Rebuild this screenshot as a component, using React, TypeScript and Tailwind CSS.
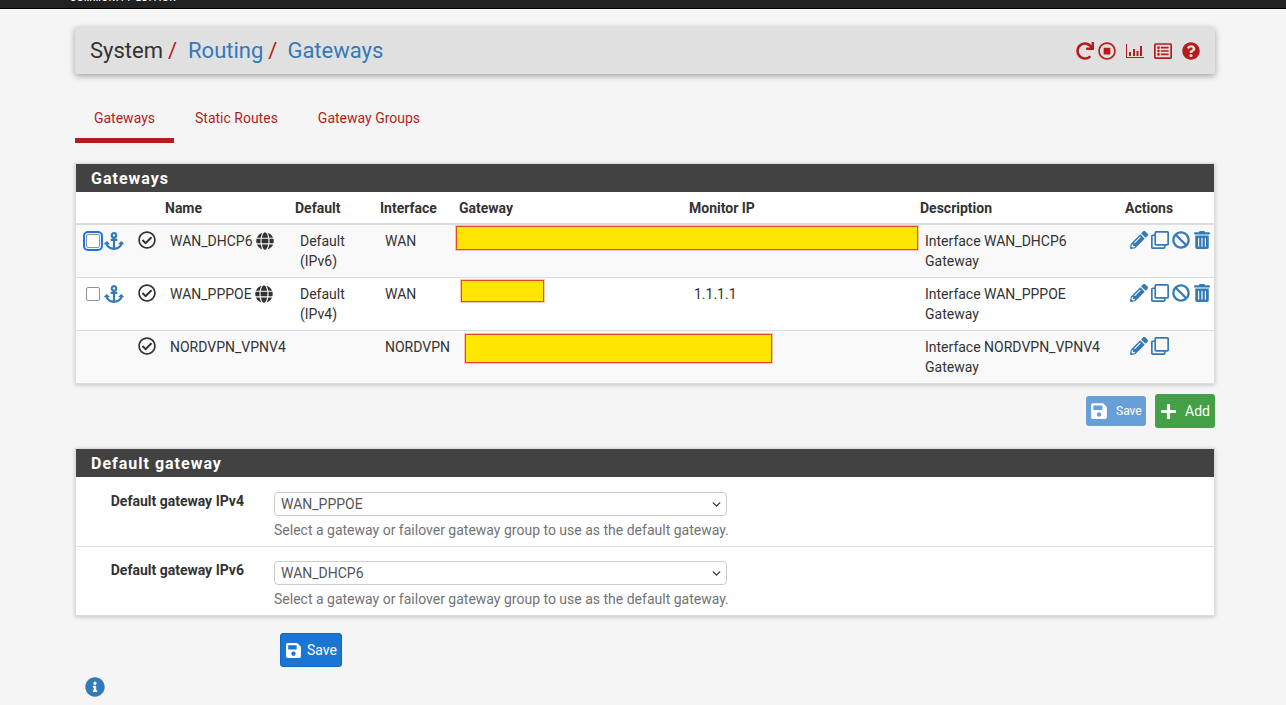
import React from 'react';
import { FaAnchor, FaBan, FaGlobe, FaInfoCircle, FaPencilAlt, FaPlus, FaQuestionCircle, FaRedo, FaRegCheckCircle, FaRegClone, FaRegListAlt, FaRegStopCircle, FaSave, FaTrashAlt } from 'react-icons/fa';
import { ChevronDown } from 'lucide-react';

const rows = [
  { name: 'WAN_DHCP6', def: ['Default', '(IPv6)'], iface: 'WAN', mask: 'w-[462px] h-[24px] ml-[-8px] mt-[-5px]', monitor: '', desc: 'Interface WAN_DHCP6', full: true, focus: true, bg: 'bg-[#f9f9f9]' },
  { name: 'WAN_PPPOE', def: ['Default', '(IPv4)'], iface: 'WAN', mask: 'w-[83px] h-[22px] ml-[-3px] mt-[-4px]', monitor: '1.1.1.1', desc: 'Interface WAN_PPPOE', full: true, focus: false, bg: 'bg-white' },
  { name: 'NORDVPN_VPNV4', def: [], iface: 'NORDVPN', mask: 'w-[307px] h-[29px] ml-[1px] mt-[-3px]', monitor: '', desc: 'Interface NORDVPN_VPNV4', full: false, focus: false, bg: 'bg-[#f9f9f9]' },
];

function ChartIcon() {
  return (
    <svg viewBox="0 0 18 16" className="w-[18px] h-[16px]" fill="currentColor">
      <path d="M0 1h1v13h17v1H0z" />
      <path d="M3 9h2v4H3zM7 6h2v7H7zM10.500 8h2v5h-2zM14 3h2v10h-2z" />
    </svg>
  );
}

function Panel({ title, children }: { title: string; children: React.ReactNode }) {
  return (
    <div className="border border-[#dddddd] shadow-[0_1px_4px_rgba(0,0,0,0.2)]">
      <div className="bg-[#424242] text-white font-bold text-[16px] tracking-[1px] h-[28px] leading-[29px] pl-[15px]">{title}</div>
      {children}
    </div>
  );
}

function GatewayField({ label, value, first }: { label: string; value: string; first?: boolean }) {
  return (
    <div className={`flex bg-white ${first ? 'h-[70px] border-b border-[#dddddd]' : 'h-[68px]'}`}>
      <div className={`w-[168px] text-right font-bold text-[14px] text-[#333333] leading-[20px] ${first ? 'pt-[14px]' : 'pt-[13px]'}`}>{label}</div>
      <div className={`pl-[30px] ${first ? 'pt-[15px]' : 'pt-[14px]'}`}>
        <div className="w-[453px] h-[24px] border border-[#cccccc] rounded-[4px] bg-white flex items-center justify-between pl-[6px] pr-[3px] text-[14px] text-[#555555]">
          <span>{value}</span>
          <ChevronDown size={13} strokeWidth={2.5} className="text-[#333333]" />
        </div>
        <div className="text-[14px] text-[#737373] leading-[20px] mt-[4px]">Select a gateway or failover gateway group to use as the default gateway.</div>
      </div>
    </div>
  );
}

export default function App() {
  return (
    <div className="min-h-[705px] bg-[#f5f5f5] font-['Roboto',sans-serif] text-[14px] text-[#333333] overflow-hidden">
      <div className="h-[9px] bg-[#212121] border-b border-black overflow-hidden">
        <div className="ml-[70px] mt-[-8px] text-[9px] font-medium tracking-[1px] text-white leading-[12px]">COMMUNITY EDITION</div>
      </div>

      <div className="ml-[75px] w-[1140px] pt-[18px]">
        <div className="h-[47px] bg-[#e0e0e0] rounded-[2px] shadow-[0_2px_6px_rgba(0,0,0,0.35)] flex items-center justify-between pl-[15px] pr-[15px]">
          <div className="text-[22px] flex">
            <span>System</span>
            <span className="text-[#b71c1c] ml-[5px] mr-[11px]">/</span>
            <span className="text-[#337ab7]">Routing</span>
            <span className="text-[#b71c1c] ml-[5px] mr-[10px]">/</span>
            <span className="text-[#337ab7]">Gateways</span>
          </div>
          <div className="flex items-center text-[#b71c1c] mt-[1px]">
            <FaRedo size={18} />
            <FaRegStopCircle size={18} className="ml-[4px]" />
            <span className="ml-[10px]"><ChartIcon /></span>
            <FaRegListAlt size={18} className="ml-[10px]" />
            <FaQuestionCircle size={18} className="ml-[10px]" />
          </div>
        </div>

        <div className="flex mt-[26px] h-[43px] text-[#b71c1c] text-[14px]">
          <div className="w-[99px] text-center border-b-[5px] border-[#b71c1c] pt-[8px]">Gateways</div>
          <div className="pl-[21px] pt-[8px]">Static Routes</div>
          <div className="pl-[40px] pt-[8px]">Gateway Groups</div>
        </div>

        <div className="mt-[20px]">
          <Panel title="Gateways">
            <table className="w-full table-fixed border-collapse bg-[#f9f9f9]">
              <colgroup>
                <col className="w-[58px]" />
                <col className="w-[31px]" />
                <col className="w-[130px]" />
                <col className="w-[85px]" />
                <col className="w-[79px]" />
                <col className="w-[230px]" />
                <col className="w-[231px]" />
                <col className="w-[205px]" />
                <col />
              </colgroup>
              <thead>
                <tr className="h-[32px] bg-white border-b-2 border-[#dddddd] text-left font-bold">
                  <th></th>
                  <th></th>
                  <th className="font-bold pt-[2px]">Name</th>
                  <th className="font-bold pt-[2px]">Default</th>
                  <th className="font-bold pt-[2px]">Interface</th>
                  <th className="font-bold pt-[2px]">Gateway</th>
                  <th className="font-bold pt-[2px]">Monitor IP</th>
                  <th className="font-bold pt-[2px]">Description</th>
                  <th className="font-bold pt-[2px]">Actions</th>
                </tr>
              </thead>
              <tbody>
                {rows.map((row, i) => (
                  <tr key={row.name} className={`h-[53px] align-top leading-[20px] ${row.bg} ${i < 2 ? 'border-b border-[#dddddd]' : ''}`}>
                    <td className="pt-[6px] pl-[10px]">
                      {i < 2 && (
                        <div className="flex items-center gap-[4px]">
                          <span className={`w-[14px] h-[14px] rounded-[2px] bg-white border border-[#8f8f9d] ${row.focus ? 'outline-2 outline-offset-[1px] outline-[#1a73e8]' : ''}`} />
                          <FaAnchor size={20} className="text-[#337ab7]" />
                        </div>
                      )}
                    </td>
                    <td className="pt-[6px] pl-[4px]"><FaRegCheckCircle size={18} /></td>
                    <td className="pt-[6px] pl-[5px]">
                      <span className="inline-flex items-center gap-[3px]">{row.name}{i < 2 && <FaGlobe size={18} />}</span>
                    </td>
                    <td className="pt-[6px] pl-[5px]">{row.def.map(d => <div key={d}>{d}</div>)}</td>
                    <td className="pt-[6px] pl-[5px]">{row.iface}</td>
                    <td className="pt-[6px] pl-[5px]">
                      <div className={`bg-[#ffe600] border border-[#e8452c] shadow-[0_0_0_1px_rgba(240,90,60,0.35)] relative z-10 ${row.mask}`} />
                    </td>
                    <td className="pt-[6px] pl-[5px]">{row.monitor}</td>
                    <td className="pt-[6px] pl-[5px]">{row.desc}<br />Gateway</td>
                    <td className="pt-[6px] pl-[5px]">
                      <div className="flex items-center gap-[3px] text-[#337ab7]">
                        <FaPencilAlt size={18} />
                        <FaRegClone size={18} />
                        {row.full && <FaBan size={18} />}
                        {row.full && <FaTrashAlt size={18} />}
                      </div>
                    </td>
                  </tr>
                ))}
              </tbody>
            </table>
          </Panel>
        </div>

        <div className="flex justify-end gap-[9px] mt-[10px] h-[34px]">
          <button className="w-[60px] h-[30px] mt-[2px] bg-[#689fd9] rounded-[3px] text-white text-[12px] flex items-center gap-[8px] pl-[4px]"><FaSave size={18} />Save</button>
          <button className="w-[60px] h-[34px] bg-[#43a047] rounded-[3px] text-white text-[14px] flex items-center gap-[8px] pl-[5px]"><FaPlus size={17} />Add</button>
        </div>

        <div className="mt-[20px]">
          <Panel title="Default gateway">
            <GatewayField label="Default gateway IPv4" value="WAN_PPPOE" first />
            <GatewayField label="Default gateway IPv6" value="WAN_DHCP6" />
          </Panel>
        </div>

        <button className="ml-[205px] mt-[17px] w-[62px] h-[34px] bg-[#1976d2] border border-[#1565c0] rounded-[3px] text-white flex items-center justify-center gap-[5px] text-[14px]"><FaSave size={17} />Save</button>
        <FaInfoCircle size={20} className="text-[#337ab7] ml-[10px] mt-[10px]" />
      </div>
    </div>
  );
}
